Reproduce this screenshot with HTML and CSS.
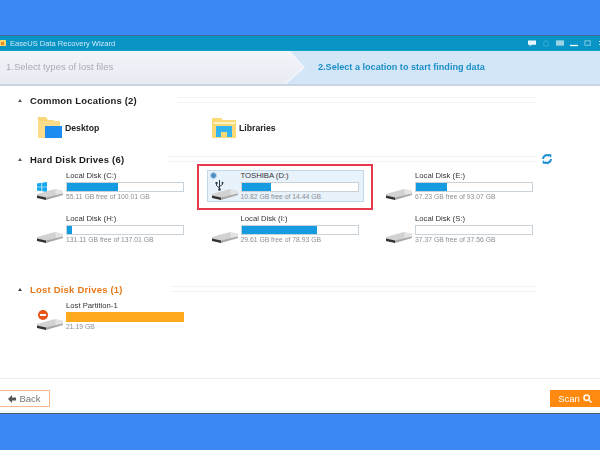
FILE: index.html
```html
<!DOCTYPE html>
<html lang="en">
<head>
<meta charset="utf-8">
<title>EaseUS Data Recovery Wizard</title>
<link rel="stylesheet" href="styles.css">
</head>
<body>
<svg class="defs" width="0" height="0">
  <symbol id="disk" viewBox="0 0 28 15">
    <polygon points="1,8 19,3 27,5 27,8 10,12 1,10" fill="#d2d2d2"/>
    <polygon points="19,3 27,5 27,8 20,9" fill="#e4e4e4"/>
    <polygon points="1,9.500 10,11.500 10,14 1,12" fill="#333"/>
    <polygon points="10,11.500 27,7.500 27,9 10,14" fill="#a8a8a8"/>
  </symbol>
</svg>
<div class="page">
  <div class="band-top"></div>
  <div class="window">
    <header class="titlebar">
      <svg class="app-icon" width="6" height="8" viewBox="0 0 6 8"><rect y="1" width="6" height="6" fill="#f6d56d"/><rect x="1" y="3" width="3" height="3" fill="#e98a1c"/></svg>
      <span class="app-name">EaseUS Data Recovery Wizard</span>
      <span class="win-icons">
        <svg width="8" height="9" viewBox="0 0 9 9"><path d="M0 1h9v5H4L2 8V6H0z" fill="#e8f6fb"/></svg>
        <svg width="8" height="9" viewBox="0 0 9 9"><circle cx="4.500" cy="4.500" r="3" fill="none" stroke="#3aaed3"/></svg>
        <svg width="8" height="9" viewBox="0 0 9 9"><rect x="0" y="1" width="9" height="6" fill="#9bd3e6"/></svg>
        <svg width="8" height="9" viewBox="0 0 9 9"><rect x="0" y="6" width="9" height="1.500" fill="#f2fbfe"/></svg>
        <svg width="8" height="9" viewBox="0 0 9 9"><rect x="1" y="1.500" width="6" height="5" fill="none" stroke="#8ccde3"/></svg>
        <svg class="win-close" width="6" height="9" viewBox="0 0 6 9"><path d="M1 2l4 4M5 2L1 6" stroke="#c4e7f2"/></svg>
      </span>
    </header>
    <nav class="steps">
      <div class="step-edge">
        <div class="step-one">1.Select types of lost files</div>
      </div>
      <div class="step-two">2.Select a location to start finding data</div>
    </nav>
    <main class="content">
      <section class="section-common">
        <h2 class="heading"><span class="caret"></span><span>Common Locations (2)</span><span class="rule"></span></h2>
        <div class="locations">
          <div class="location">
            <svg width="26" height="23" viewBox="0 0 26 23"><path d="M1 1h8l2 3h6v6H1z" fill="#f9d777"/><rect x="1" y="5" width="22" height="17" fill="#fbdc88"/><rect x="8" y="10" width="17" height="12" fill="#1c8cf0"/></svg>
            <span>Desktop</span>
          </div>
          <div class="location">
            <svg width="26" height="23" viewBox="0 0 26 23"><path d="M1 2h9l2 2h13v18H1z" fill="#fbd977"/><rect x="3" y="6" width="21" height="2" fill="#fff3c9"/><path d="M5 10h16v11h-5v-5h-6v5H5z" fill="#32b4ee"/></svg>
            <span>Libraries</span>
          </div>
        </div>
      </section>

      <section class="section-disks">
        <div class="heading-row">
          <h2 class="heading"><span class="caret"></span><span>Hard Disk Drives (6)</span><span class="rule"></span></h2>
          <svg class="refresh" width="12" height="12" viewBox="0 0 12 12"><path d="M2 6a4 4 0 0 1 6.500-3" fill="none" stroke="#1b8fd6" stroke-width="2"/><path d="M10 6a4 4 0 0 1-6.500 3" fill="none" stroke="#1b8fd6" stroke-width="2"/><path d="M7 1l3.500.5-.5 3.500zM5 11l-3.500-.5.5-3.500z" fill="#1b8fd6"/></svg>
        </div>
        <div class="drives">
          <div class="drive">
            <div class="drive-icon">
              <svg class="badge-win" width="10" height="10" viewBox="0 0 10 10"><path d="M0 1.500l4.500-.7v3.900H0zM5.200.7L10 0v4.700H5.200zM0 5.300h4.500v3.900L0 8.500zM5.200 5.300H10V10l-4.800-.7z" fill="#16a9ec"/></svg>
              <svg class="disk" width="28" height="15"><use href="#disk"/></svg>
            </div>
            <div class="drive-info">
              <div class="drive-name">Local Disk (C:)</div>
              <div class="bar"><div class="fill" style="width:44%"></div></div>
              <div class="drive-size">55.11 GB free of 100.01 GB</div>
            </div>
          </div>
          <div class="drive selected">
            <div class="drive-icon">
              <span class="radio"></span>
              <svg class="usb" width="9" height="11" viewBox="0 0 9 11"><path d="M4.500 0v10M4.500 8L1.500 5.500V3.500M4.500 6.500L7.500 4.500V3" fill="none" stroke="#2d3a42" stroke-width="1"/><circle cx="4.500" cy="9.500" r="1.300" fill="#2d3a42"/><rect x="0.500" y="2" width="2" height="2" fill="#2d3a42"/><circle cx="7.500" cy="2.800" r="1" fill="#2d3a42"/></svg>
              <svg class="disk" width="28" height="15"><use href="#disk"/></svg>
            </div>
            <div class="drive-info">
              <div class="drive-name">TOSHIBA (D:)</div>
              <div class="bar"><div class="fill" style="width:25%"></div></div>
              <div class="drive-size">10.82 GB free of 14.44 GB</div>
            </div>
          </div>
          <div class="drive">
            <div class="drive-icon"><svg class="disk" width="28" height="15"><use href="#disk"/></svg></div>
            <div class="drive-info">
              <div class="drive-name">Local Disk (E:)</div>
              <div class="bar"><div class="fill" style="width:27%"></div></div>
              <div class="drive-size">67.23 GB free of 93.07 GB</div>
            </div>
          </div>
          <div class="drive">
            <div class="drive-icon"><svg class="disk" width="28" height="15"><use href="#disk"/></svg></div>
            <div class="drive-info">
              <div class="drive-name">Local Disk (H:)</div>
              <div class="bar"><div class="fill" style="width:4%"></div></div>
              <div class="drive-size">131.11 GB free of 137.01 GB</div>
            </div>
          </div>
          <div class="drive">
            <div class="drive-icon"><svg class="disk" width="28" height="15"><use href="#disk"/></svg></div>
            <div class="drive-info">
              <div class="drive-name">Local Disk (I:)</div>
              <div class="bar"><div class="fill" style="width:65%"></div></div>
              <div class="drive-size">29.61 GB free of 78.93 GB</div>
            </div>
          </div>
          <div class="drive">
            <div class="drive-icon"><svg class="disk" width="28" height="15"><use href="#disk"/></svg></div>
            <div class="drive-info">
              <div class="drive-name">Local Disk (S:)</div>
              <div class="bar"><div class="fill" style="width:0%"></div></div>
              <div class="drive-size">37.37 GB free of 37.56 GB</div>
            </div>
          </div>
        </div>
      </section>

      <section class="section-lost">
        <h2 class="heading lost"><span class="caret"></span><span>Lost Disk Drives (1)</span><span class="rule"></span></h2>
        <div class="drives">
          <div class="drive">
            <div class="drive-icon">
              <svg class="badge-lost" width="10" height="10" viewBox="0 0 10 10"><circle cx="5" cy="5" r="5" fill="#e8541a"/><rect x="2" y="4" width="6" height="2" fill="#fff"/></svg>
              <svg class="disk" width="28" height="15"><use href="#disk"/></svg>
            </div>
            <div class="drive-info">
              <div class="drive-name">Lost Partition-1</div>
              <div class="bar bar-lost"></div>
              <div class="drive-size">21.19 GB</div>
            </div>
          </div>
        </div>
      </section>
    </main>
    <footer class="footer">
      <button class="btn btn-back"><svg width="8" height="8" viewBox="0 0 8 8"><path d="M4 0v2.500h4v3H4V8L0 4z" fill="#555"/></svg>Back</button>
      <button class="btn btn-scan">Scan<svg width="9" height="9" viewBox="0 0 9 9"><circle cx="3.700" cy="3.700" r="2.700" fill="none" stroke="#fff" stroke-width="1.500"/><path d="M6 6l2.500 2.500" stroke="#fff" stroke-width="1.500"/></svg></button>
    </footer>
  </div>
  <div class="band-bottom"></div>
</div>
</body>
</html>
```
FILE: styles.css
```css
*, *::before, *::after { box-sizing: border-box; }
html, body { margin: 0; padding: 0; }
body { font-family: "Liberation Sans", Arial, sans-serif; background: #3b87f3; }
.defs { position: absolute; }
.page { width: 600px; height: 450px; display: flex; flex-direction: column; overflow: hidden; }
.band-top { height: 35px; background: #3b87f3; }
.band-bottom { height: 36px; background: #3b87f3; }
.window { flex: 1; min-height: 0; background: #fff; display: flex; flex-direction: column; border-top: 1px solid #3c6d92; filter: blur(.35px); }

.titlebar { height: 15px; background: #0a94c6; display: flex; align-items: center; gap: 4px; color: #cdeaf5; font-size: 7.550px; border-bottom: 1px solid #0fa3c9; }
.app-icon { display: block; }
.win-icons { margin-left: auto; display: flex; align-items: center; gap: 6px; margin-right: -4px; }
.win-icons svg { display: block; }

.steps { height: 35px; display: flex; background: #d3e6f8; border-bottom: 2px solid #c9d6e2; }
.step-edge { width: 305px; filter: drop-shadow(2px 0 0 #f1f7fc); }
.step-one { height: 100%; clip-path: polygon(0 0, 288px 0, 303px 50%, 284px 100%, 0 100%); background: linear-gradient(#f3f4fa, #e9ebf2); color: #a8adb3; font-size: 9.500px; display: flex; align-items: center; padding: 0 0 2px 6px; }
.step-two { padding: 0 0 2px 13px; display: flex; align-items: center; color: #1b8fc8; font-size: 9.100px; font-weight: bold; }

.content { flex: 1; min-height: 0; padding-top: 7px; }
.heading { margin: 0; height: 14px; display: flex; align-items: center; font-size: 9.500px; font-weight: bold; color: #1d1d1d; padding-left: 18px; padding-right: 64px; letter-spacing: .2px; flex: 1; }
.caret { width: 0; height: 0; border-left: 2.500px solid transparent; border-right: 2.500px solid transparent; border-bottom: 3px solid #555; margin-right: 8px; }
.rule { flex: 1; height: 6px; border-top: 1px solid #f4f4f4; border-bottom: 1px solid #f4f4f4; margin-left: 40px; }
.locations { display: grid; grid-template-columns: 174px 174px; padding-left: 37px; margin-top: 9px; }
.location { display: flex; align-items: center; gap: 2px; height: 23px; font-size: 8.700px; font-weight: bold; color: #222; }

.section-disks { margin-top: 13px; }
.heading-row { display: flex; align-items: center; padding-right: 47px; }
.heading-row .heading { padding-right: 0; }
.heading-row .rule { margin: 0 4px 0 43px; }
.refresh { display: block; }
.drives { display: grid; grid-template-columns: repeat(3, 174.500px); row-gap: 9px; padding-left: 32px; margin-top: 4px; }
.drive { width: 157px; height: 34px; display: flex; border: 1px solid transparent; position: relative; }
.drive-icon { width: 33px; position: relative; }
.disk { position: absolute; left: 3px; top: 15px; display: block; }
.badge-win { position: absolute; left: 4px; top: 11px; }
.badge-lost { position: absolute; left: 5px; top: 9px; }
.drive-info { width: 118px; }
.drive-name { height: 10px; line-height: 10px; font-size: 7.700px; color: #333; white-space: nowrap; }
.bar { height: 10px; margin-top: 1px; border: 1px solid #c9d2d8; background: #fff; }
.fill { height: 100%; background: #159be0; }
.bar-lost { background: #fdaa1f; border: 0; }
.drive-size { height: 10px; line-height: 10px; font-size: 6.800px; color: #8b8f92; white-space: nowrap; }

.selected { background: #e8f2fb; border-color: #c2d9ec; height: 32px; }
.selected::after { content: ""; position: absolute; left: -11px; top: -7px; width: 176px; height: 46px; border: 2px solid #e63a4c; }
.radio { position: absolute; left: 2px; top: 1px; width: 7px; height: 7px; border-radius: 50%; background: #4a8fc0; border: 1px solid #bcd8ec; }
.usb { position: absolute; left: 7px; top: 9px; display: block; }

.section-lost { margin-top: 35px; }
.lost { color: #e8791a; }
.lost .caret { border-bottom-color: #444; }
.lost .rule { margin-left: 47px; }

.footer { height: 36px; border-top: 1px solid #ececec; border-bottom: 1px solid #4a5a68; box-shadow: inset 0 -3px 0 #f0fbfd; display: flex; justify-content: space-between; align-items: flex-start; padding-top: 11px; }
.btn { height: 17px; width: 50px; font: 9.500px "Liberation Sans", Arial, sans-serif; display: flex; align-items: center; justify-content: center; gap: 3px; padding: 0; }
.btn-back { background: #fff; color: #777; border: 1px solid #f4b78b; border-left: 0; }
.btn-scan { background: #ff8a0f; color: #fff; border: 0; }
```
